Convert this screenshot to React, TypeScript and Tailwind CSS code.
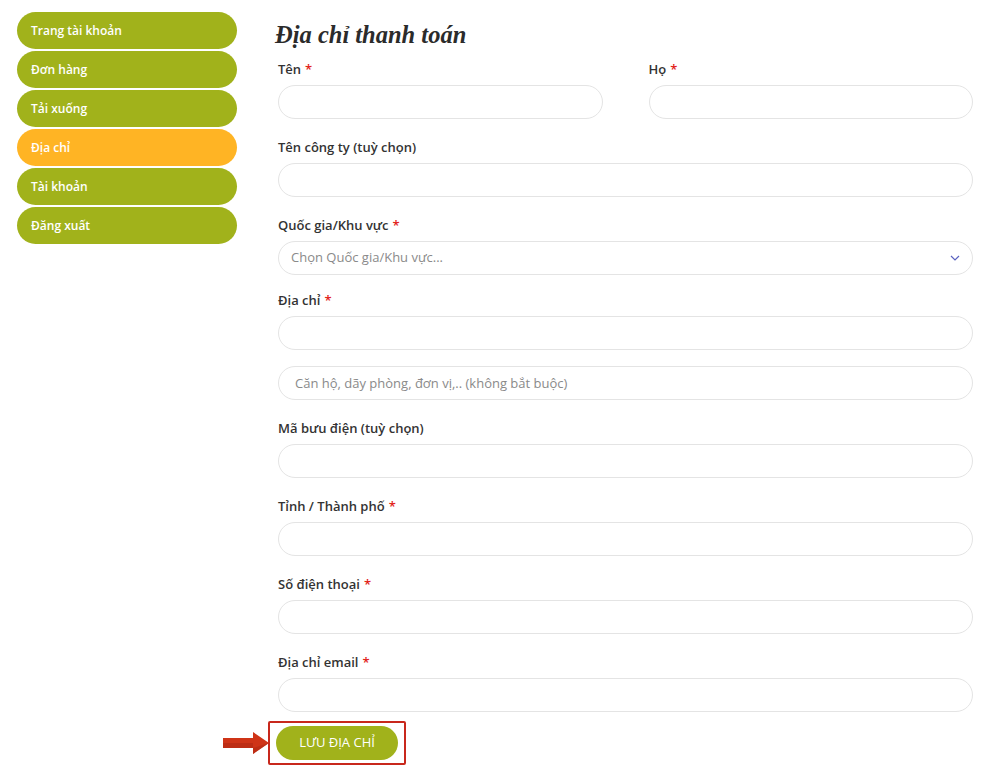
import React from 'react';

const menu = [
    { label: 'Trang tài khoản', active: false },
    { label: 'Đơn hàng', active: false },
    { label: 'Tải xuống', active: false },
    { label: 'Địa chỉ', active: true },
    { label: 'Tài khoản', active: false },
    { label: 'Đăng xuất', active: false },
];

const inputClass =
    'block h-[34px] w-full rounded-full border border-[#e4e4e4] bg-white px-4 text-[13px] text-[#555] placeholder:text-[#8a8a8a] focus:outline-none';

const Label = ({ text, required }: { text: string; required?: boolean }) => (
    <label className="block text-[13px] font-semibold leading-5 text-[#333]">
        {text}
        {required && <span className="ml-1 text-[#e2231a]">*</span>}
    </label>
);

const Field = ({
    label,
    required,
    placeholder,
    className = 'pt-[18px]',
}: {
    label: string;
    required?: boolean;
    placeholder?: string;
    className?: string;
}) => (
    <div className={className}>
        <Label text={label} required={required} />
        <input type="text" placeholder={placeholder} className={`mt-[6px] ${inputClass}`} />
    </div>
);

export default function App() {
    return (
        <div className="min-h-[776px] w-[999px] bg-white font-['Open_Sans',sans-serif]">
            <div className="flex">
                <aside className="ml-[17px] mt-[12px] flex w-[220px] flex-col gap-[2px]">
                    {menu.map((item) => (
                        <a
                            key={item.label}
                            href="#"
                            className={`flex h-[37px] items-center rounded-full pl-[14px] text-[12px] font-semibold text-white ${
                                item.active ? 'bg-[#ffb424]' : 'bg-[#a1b21b]'
                            }`}
                        >
                            {item.label}
                        </a>
                    ))}
                </aside>

                <main className="ml-[41px] w-[695px] pt-[20px]">
                    <h2 className="-ml-[3px] font-['Liberation_Serif',serif] text-[24.5px] font-bold italic leading-[30px] text-[#2b2b2b]">
                        Địa chỉ thanh toán
                    </h2>

                    <div className="mt-[9px] grid grid-cols-2 gap-x-[46px]">
                        <Field label="Tên" required className="" />
                        <Field label="Họ" required className="" />
                    </div>

                    <Field label="Tên công ty (tuỳ chọn)" />

                    <div className="pt-[18px]">
                        <Label text="Quốc gia/Khu vực" required />
                        <div className="mt-[6px] flex h-[34px] w-full items-center rounded-full border border-[#e4e4e4] bg-white pl-3 pr-4 text-[13px] text-[#8a8a8a]">
                            <span className="flex-1">Chọn Quốc gia/Khu vực...</span>
                            <svg width="10" height="6" viewBox="0 0 10 6" className="mr-[-4px]">
                                <path d="M1 1l4 4 4-4" fill="none" stroke="#5b63c0" strokeWidth="1.2" />
                            </svg>
                        </div>
                    </div>

                    <div className="pt-[15px]">
                        <Label text="Địa chỉ" required />
                        <input type="text" className={`mt-[6px] ${inputClass}`} />
                        <input
                            type="text"
                            placeholder="Căn hộ, dãy phòng, đơn vị,.. (không bắt buộc)"
                            className={`mt-[16px] ${inputClass}`}
                        />
                    </div>

                    <Field label="Mã bưu điện (tuỳ chọn)" />
                    <Field label="Tỉnh / Thành phố" required />
                    <Field label="Số điện thoại" required />
                    <Field label="Địa chỉ email" required />

                    <div className="relative mt-[14px] -ml-[2px] w-[122px]">
                        <button
                            type="button"
                            className="h-[34px] w-[122px] rounded-full bg-[#a1b21b] text-[13px] text-white"
                        >
                            LƯU ĐỊA CHỈ
                        </button>
                        <div className="pointer-events-none absolute -left-[8px] -top-[5px] h-[44px] w-[138px] rounded-[2px] border-2 border-[#c8281c]" />
                        <svg
                            width="46"
                            height="22"
                            viewBox="0 0 46 22"
                            className="absolute -left-[53px] top-[6px]"
                        >
                            <path d="M0 6h30V0l16 11-16 11v-6H0z" fill="#cf3417" />
                            <path d="M0 11h30v5H0z M30 16v6l16-11z" fill="#b02a12" opacity="0.6" />
                        </svg>
                    </div>
                </main>
            </div>
        </div>
    );
}
